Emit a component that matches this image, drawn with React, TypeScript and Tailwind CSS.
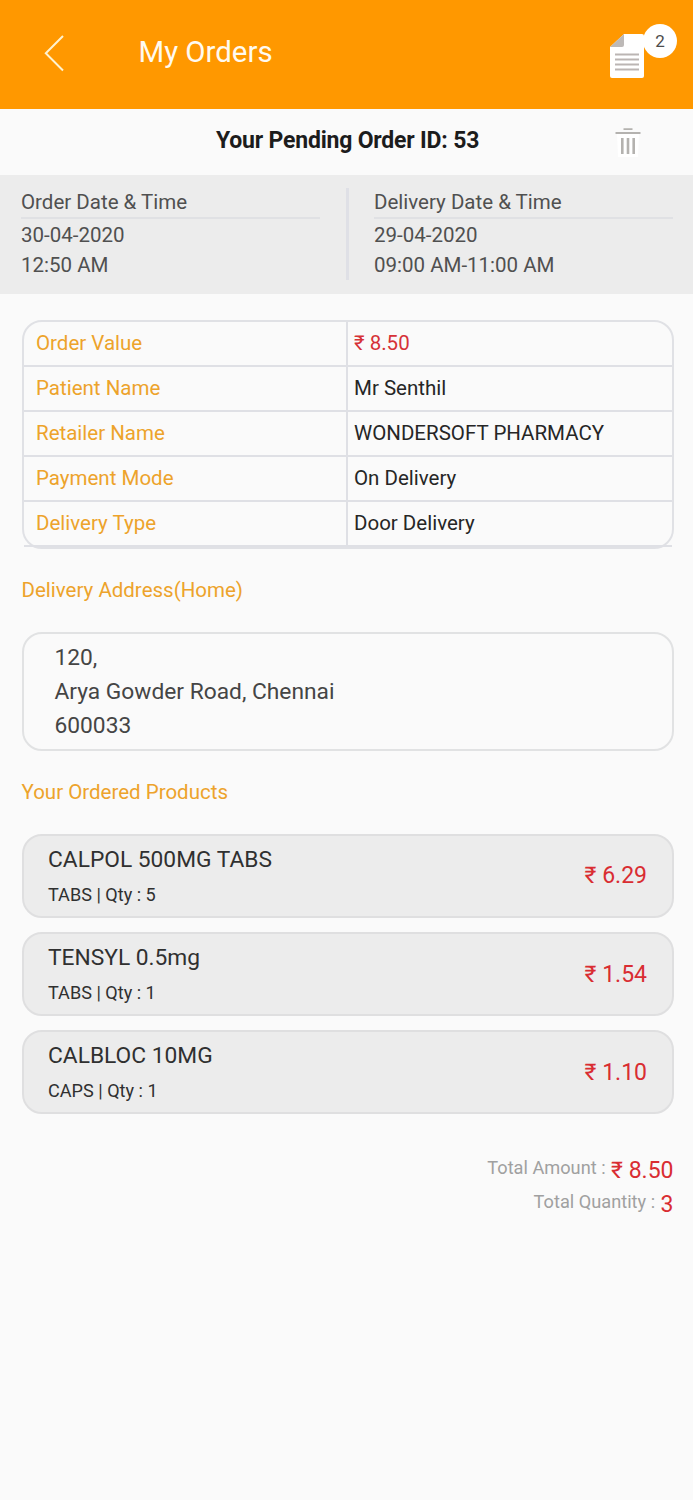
const details = [
  { label: 'Order Value', value: '₹ 8.50', price: true },
  { label: 'Patient Name', value: 'Mr Senthil' },
  { label: 'Retailer Name', value: 'WONDERSOFT PHARMACY' },
  { label: 'Payment Mode', value: 'On Delivery' },
  { label: 'Delivery Type', value: 'Door Delivery' },
];

const products = [
  { name: 'CALPOL 500MG TABS', info: 'TABS | Qty : 5', price: '₹ 6.29' },
  { name: 'TENSYL 0.5mg', info: 'TABS | Qty : 1', price: '₹ 1.54' },
  { name: 'CALBLOC 10MG', info: 'CAPS | Qty : 1', price: '₹ 1.10' },
];

function Header() {
  return (
    <header className="flex h-[108.5px] items-start bg-[#ff9800] text-[#fffaf0]">
      <button aria-label="Back" className="mt-[34px] ml-[44px]">
        <svg width="20" height="38" viewBox="0 0 20 38" fill="none" stroke="#fff3d0" strokeWidth="2">
          <path d="M19 2 1.8 19.2 19 36.5" />
        </svg>
      </button>
      <h1 className="mt-[34px] ml-[74.5px] text-[29.4px] leading-[36px]">My Orders</h1>
      <div className="relative mt-[34px] mr-[49px] ml-auto">
        <svg width="34" height="44" viewBox="0 0 34 44">
          <path d="M14 0h18a2 2 0 0 1 2 2v40a2 2 0 0 1-2 2H2a2 2 0 0 1-2-2V13Z" fill="#fff" />
          <path d="M14 0v11a2 2 0 0 1-2 2H0Z" fill="#bdb9b7" />
          <path d="M5 20.5h24M5 25.5h24M5 30.5h24M5 35.5h24" stroke="#bbb5b3" strokeWidth="2.2" />
        </svg>
        <span className="absolute -top-[10px] left-[33px] flex size-[34px] items-center justify-center rounded-full bg-white pt-[2px] text-[17px] text-[#4c4c4c]">
          2
        </span>
      </div>
    </header>
  );
}

function TrashIcon() {
  return (
    <svg width="26" height="30" viewBox="0 0 26 30" fill="none" stroke="#b4b2af">
      <path d="M2 6h22l-1 24H3Z" fill="#fff" stroke="none" />
      <path d="M8.5 2.2h9M.5 6h25" strokeWidth="1.8" />
      <path d="M7.3 11v16M13 11v16M18.7 11v16" strokeWidth="2.6" />
    </svg>
  );
}

function Schedule({ title, date, time }: { title: string; date: string; time: string }) {
  return (
    <div className="w-[299px] text-[20.5px] leading-[30px] text-[#505050]">
      <h3 className="h-[32px] border-b-2 border-[#e0e1e4]">{title}</h3>
      <p className="mt-[0.5px]">{date}</p>
      <p>{time}</p>
    </div>
  );
}

export default function App() {
  return (
    <div className="min-h-[1500px] w-[693px] overflow-hidden bg-[#fafafa] font-['Roboto',sans-serif]">
      <Header />
      <div className="flex h-[66.5px] items-center">
        <h2 className="-mt-[2px] ml-[216px] text-[23px] font-bold tracking-[-0.2px] text-[#1c1c1c]">Your Pending Order ID: 53</h2>
        <button aria-label="Delete order" className="mr-[52px] ml-auto">
          <TrashIcon />
        </button>
      </div>

      <section className="flex h-[118.5px] bg-[#ececec] pt-[12px] pl-[21px]">
        <Schedule title="Order Date & Time" date="30-04-2020" time="12:50 AM" />
        <div className="mt-px mr-[25px] ml-[26px] h-[92px] w-[3px] bg-[#dfe0e6]" />
        <Schedule title="Delivery Date & Time" date="29-04-2020" time="09:00 AM-11:00 AM" />
      </section>

      <main className="pr-[19.5px] pl-[21.5px]">
        <div className="mt-[26.5px] h-[228.5px] rounded-[20px] border-2 border-[#e0e1e5]">
          {details.map((d) => (
            <div key={d.label} className="flex h-[45.1px] items-center border-b-2 border-[#dfe0e5] text-[20.5px]">
              <div className="-mt-px w-[322px] pl-[12.5px] text-[#eda32b]">{d.label}</div>
              <div
                className={`flex flex-1 items-center self-stretch border-l-2 border-[#dfe0e5] pb-px pl-[6.5px] ${
                  d.price ? 'text-[#d63237]' : 'text-[#262626]'
                }`}
              >
                {d.value}
              </div>
            </div>
          ))}
        </div>

        <h3 className="mt-[27px] text-[20.5px] leading-[28px] text-[#eda32b]">Delivery Address(Home)</h3>
        <address className="mt-[28px] h-[119px] rounded-[20px] border-2 border-[#e1e2e3] pt-[7px] pl-[31px] text-[22.75px] leading-[34px] text-[#454545] not-italic">
          120,
          <br />
          Arya Gowder Road, Chennai
          <br />
          600033
        </address>

        <h3 className="mt-[27px] text-[20.5px] leading-[28px] text-[#eda32b]">Your Ordered Products</h3>
        <ul className="mt-[28px] flex flex-col gap-[14px]">
          {products.map((p) => (
            <li
              key={p.name}
              className="flex h-[84.2px] items-center justify-between rounded-[20px] border-2 border-[#dfdfe0] bg-[#ececec] pr-[24.5px] pl-[24.5px]"
            >
              <div className="self-start text-[#303030]">
                <p className="mt-[8px] text-[22.75px] leading-[32px]">{p.name}</p>
                <p className="mt-[6px] text-[18.1px] leading-[26px]">{p.info}</p>
              </div>
              <span className="mt-[2px] text-[23px] text-[#d92d32]">{p.price}</span>
            </li>
          ))}
        </ul>

        <dl className="mt-[37.5px] flex flex-col text-[18.2px] leading-[34px] text-[#a0a0a0]">
          <div className="flex h-[34px] justify-end gap-[5.5px]">
            <dt className="-mt-px">Total Amount :</dt>
            <dd className="mt-[2px] text-[23px] text-[#d92d32]">₹ 8.50</dd>
          </div>
          <div className="flex h-[34px] justify-end gap-[5.5px]">
            <dt className="-mt-px">Total Quantity :</dt>
            <dd className="mt-[2px] text-[23px] text-[#d92d32]">3</dd>
          </div>
        </dl>
      </main>
    </div>
  );
}
